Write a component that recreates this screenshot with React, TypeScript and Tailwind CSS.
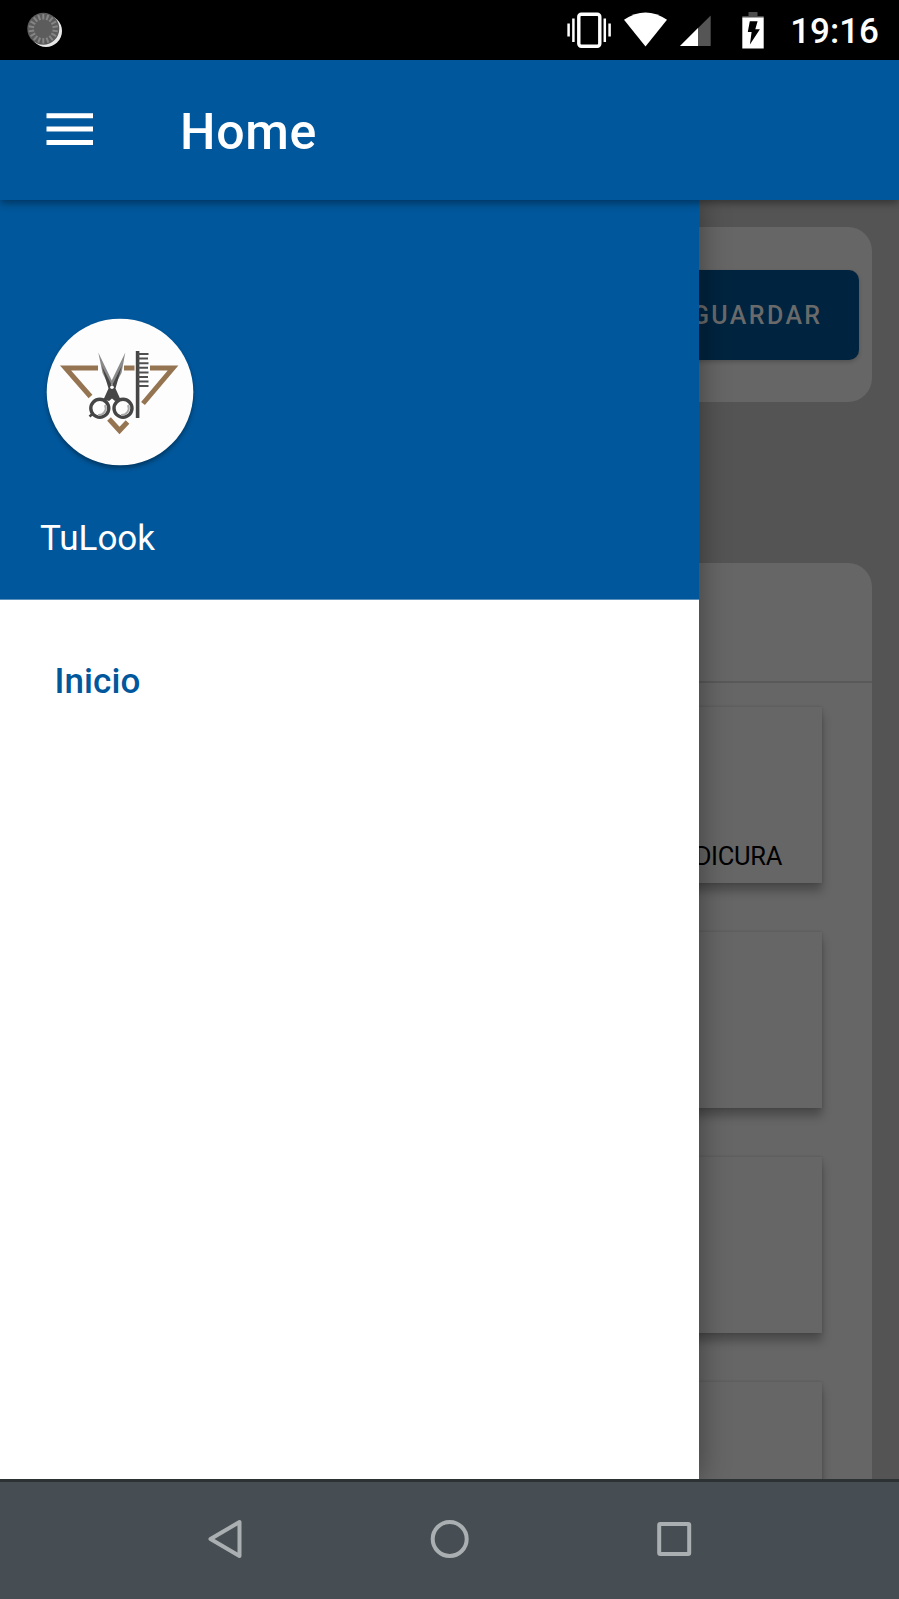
import React from "react";

function StatusBar() {
  const spokes = Array.from({ length: 18 }, (_, i) => i * 20);
  return (
    <div className="flex h-[60px] shrink-0 items-center bg-black pl-[26px] pr-[20px] text-white">
      <svg className="h-[38px] w-[38px]" viewBox="0 0 38 38">
        <circle cx="20" cy="20" r="16" fill="#e8e8e8" />
        <circle cx="17.3" cy="17.8" r="16" fill="#5c5c5c" />
        {spokes.map((a) => (
          <path key={a} d="M17.3 3V8.5" stroke="#858585" strokeWidth="2" transform={`rotate(${a} 17.3 17.8)`} />
        ))}
      </svg>
      <div className="ml-auto flex items-center">
        <svg className="h-[60px] w-[210px]" viewBox="560 0 210 60">
          <rect x="578.8" y="14.3" width="21" height="32" rx="2.5" fill="none" stroke="#fff" strokeWidth="3.4" />
          <path d="M568.6 23.5v13M573.4 18.5v23.5M604.8 18.5v23.5M609.6 23.5v13" stroke="#fff" strokeWidth="2.5" />
          <path d="M624 19.8Q645.5 5 667 19.8L645.5 46.5Z" fill="#fff" />
          <path d="M710.7 15.5V46H680Z" fill="#555" />
          <path d="M698 28V46H680Z" fill="#fff" />
          <path d="M748.5 12h9v4h6.2v2h-21.4v-2h6.200z" fill="#4c4c4c" />
          <path d="M742.3 17.5h21.4v31h-21.4z" fill="#fff" />
          <path d="M749.8 21.3h7.8l-2.3 8h4.6l-10 15.2 1.7-12.5h-3.8z" fill="#000" />
        </svg>
        <div className="w-[109px] pt-[3px] text-right text-[35px] font-medium leading-none">19:16</div>
      </div>
    </div>
  );
}

function AppBar() {
  return (
    <header className="relative z-20 flex h-[140px] shrink-0 items-center bg-[#01579b] pl-[46px] text-white shadow-[0_3px_8px_rgba(0,0,0,0.4)]">
      <svg className="h-[34px] w-[48px]" viewBox="0 0 48 34">
        <path d="M.5 2.8h46.5M.5 16.1h46.5M.5 29.4h46.5" stroke="#fff" strokeWidth="5" />
      </svg>
      <h1 className="ml-[86px] pt-[4px] text-[50px] font-medium leading-none tracking-[0.7px]">Home</h1>
    </header>
  );
}

function Logo() {
  return (
    <svg className="h-[148px] w-[148px] drop-shadow-[0_3px_2px_rgba(0,0,0,0.35)]" viewBox="46 318 148 148">
      <circle cx="120" cy="392" r="73.3" fill="#fdfdfd" />
      <path d="M98 368H65.5L90.5 396.5M124 368H134.5M150 368H173L143 403.5M109 419L119.5 430.5L127.5 422" fill="none" stroke="#957452" strokeWidth="5" />
      <path d="M98.3 352.5L113 383L109 386L102.5 373Z" fill="#8a8a8a" />
      <path d="M125.3 352.5L110.5 383L114.5 386L121.5 373Z" fill="#8a8a8a" />
      <path d="M101.8 366L108.5 388.5L103.5 399.5L109 401L112 398.5L115 401L120.5 399.5L115.5 388.5L121.8 366L112 385.5Z" fill="#464646" />
      <circle cx="112" cy="387.2" r="1.8" fill="#fff" />
      <circle cx="99.8" cy="408.3" r="9" fill="#fdfdfd" stroke="#464646" strokeWidth="3.4" />
      <circle cx="123" cy="408.3" r="9" fill="#fdfdfd" stroke="#464646" strokeWidth="3.4" />
      <path d="M98 415a7 7 0 0 0 7-10M121 415a7 7 0 0 0 7-10" fill="none" stroke="#aaa" strokeWidth="2" />
      <path d="M92.5 414L89.5 416.5" stroke="#464646" strokeWidth="2.5" />
      <path d="M137.6 351V418" stroke="#464646" strokeWidth="3.6" />
      <path d="M138 354h10.500M138 358.600h10M138 363.200h10.500M138 367.800h10M138 372.400h10.500M138 377h10M138 381.500h10.500M138 386h10.500" stroke="#505050" strokeWidth="2" />
    </svg>
  );
}

function Drawer() {
  return (
    <aside className="absolute inset-y-0 left-0 z-10 flex w-[699px] flex-col bg-white shadow-[0_0_28px_rgba(0,0,0,0.4)]">
      <div className="h-[400px] border-b border-[#5c90bd] bg-[#01579b] pt-[118px] text-white">
        <div className="pl-[46px]">
          <Logo />
        </div>
        <p className="mt-[55px] pl-[40px] text-[35px] leading-[36px]">TuLook</p>
      </div>
      <nav className="pl-[54.5px] pt-[64px]">
        <a className="block text-[35px] font-medium leading-[36px] tracking-[0.1px] text-[#01579b]">Inicio</a>
      </nav>
    </aside>
  );
}

function ServiceCard({ label }: { label?: string }) {
  return (
    <div className="flex h-[176px] w-[240px] shrink-0 items-end justify-end bg-[#666] pb-[14px] pr-[40px] text-[25.5px] leading-[26px] tracking-[-0.3px] text-black shadow-[0_8px_9px_rgba(0,0,0,0.28),0_0_3px_rgba(0,0,0,0.15)]">
      {label}
    </div>
  );
}

function Content() {
  return (
    <main className="flex h-full flex-col overflow-hidden bg-[#545454] px-[27px] pt-[27px]">
      <section className="flex h-[175px] shrink-0 items-center justify-end rounded-[24px] bg-[#666] pr-[13px]">
        <button className="flex h-[90px] w-[220px] items-center justify-end rounded-[10px] bg-[#00243f] pr-[36.5px] pt-[2px] text-[25px] font-medium tracking-[2.4px] text-[#6a6a6a] shadow-[0_2px_4px_rgba(0,0,0,0.2)]">
          GUARDAR
        </button>
      </section>
      <section className="mt-[161px] flex grow flex-col rounded-t-[24px] bg-[#666]">
        <div className="h-[120px] shrink-0 border-b-2 border-[#595959]" />
        <div className="flex flex-col items-end gap-[49px] pr-[50px] pt-[24px]">
          <ServiceCard label="DICURA" />
          <ServiceCard />
          <ServiceCard />
          <ServiceCard />
        </div>
      </section>
    </main>
  );
}

function NavigationBar() {
  return (
    <footer className="relative z-30 flex h-[120px] shrink-0 items-center justify-center gap-[184px] border-t-[3px] border-[#2c3134] bg-[#464e54] pb-[3px]">
      <svg className="h-[40px] w-[40px]" viewBox="0 0 40 40" fill="none" stroke="#aaafb1" strokeWidth="4" strokeLinejoin="round">
        <path d="M33.5 3V37L4.5 20Z" />
      </svg>
      <svg className="h-[40px] w-[40px]" viewBox="0 0 40 40" fill="none" stroke="#aaafb1" strokeWidth="4">
        <circle cx="19.7" cy="20" r="17" />
      </svg>
      <svg className="h-[40px] w-[40px]" viewBox="0 0 40 40" fill="none" stroke="#aaafb1" strokeWidth="4">
        <rect x="5.2" y="5" width="30" height="30" rx="1" />
      </svg>
    </footer>
  );
}

export default function App() {
  return (
    <div className="flex h-[1599px] w-[899px] flex-col overflow-hidden bg-black font-[Roboto,sans-serif]">
      <StatusBar />
      <AppBar />
      <div className="relative h-[1279px] shrink-0 overflow-hidden">
        <Content />
        <Drawer />
      </div>
      <NavigationBar />
    </div>
  );
}
